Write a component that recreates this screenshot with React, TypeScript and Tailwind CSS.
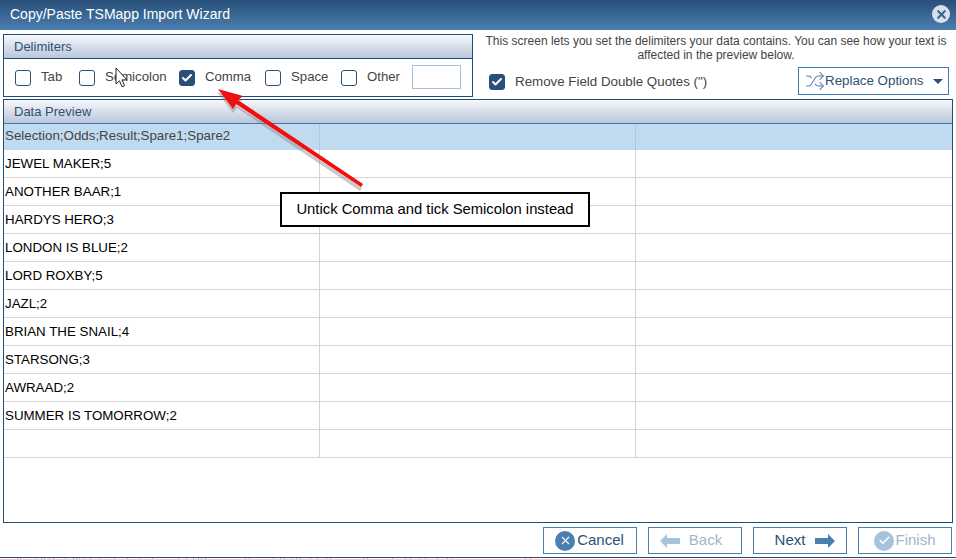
import { Check, Shuffle, X } from "lucide-react";
import React from "react";

const delimiters = [
  { label: "Tab", checked: false, box: "ml-[11px]", text: "ml-[10px] w-[23px]" },
  { label: "Semicolon", checked: false, box: "ml-[15px]", text: "ml-[10px] w-[61px]" },
  { label: "Comma", checked: true, box: "ml-[13px]", text: "ml-[10px] w-[46px]" },
  { label: "Space", checked: false, box: "ml-[14px]", text: "ml-[10px] w-[37px]" },
  { label: "Other", checked: false, box: "ml-[13px]", text: "ml-[10px] w-[33px]" },
];

const rows = [
  "JEWEL MAKER;5",
  "ANOTHER BAAR;1",
  "HARDYS HERO;3",
  "LONDON IS BLUE;2",
  "LORD ROXBY;5",
  "JAZL;2",
  "BRIAN THE SNAIL;4",
  "STARSONG;3",
  "AWRAAD;2",
  "SUMMER IS TOMORROW;2",
  "",
];

// cut-off text of the page below the dialog, only its top pixels show
const specks = [17, 20, 36, 41, 44, 49, 53, 65, 73, 76, 79, 83, 90, 99, 114, 127, 140, 152, 178, 186, 193, 198, 201, 205, 245, 249, 273, 280, 284, 292, 296, 300, 310, 317, 326, 330, 363, 367, 392, 405, 410, 420, 425, 437, 447, 452, 525, 530];

const Tick = ({ checked }: { checked: boolean }) => (
  <span
    className={`flex h-[16px] w-[16px] shrink-0 items-center justify-center rounded-[3px] border-[1.5px] border-[#2a5078] ${
      checked ? "bg-[#2a5078]" : "bg-white"
    }`}
  >
    {checked && <Check className="h-[12px] w-[12px] text-white" strokeWidth={4} />}
  </span>
);

const PanelHeader = ({ title }: { title: string }) => (
  <div className="flex h-[23px] items-center bg-gradient-to-b from-[#f7f8fb] to-[#b9c6da] pl-[10px] text-[13px] text-[#2d4f73]">
    {title}
  </div>
);

const Cell = ({ text, last }: { text?: string; last?: boolean }) => (
  <div className={`truncate pl-[1px] ${last ? "" : "border-r border-[#d4d4d4]"}`}>{text}</div>
);

export default function App() {
  return (
    <div className="relative flex h-[559px] w-[956px] flex-col overflow-hidden bg-white font-['Liberation_Sans',Arial,sans-serif] text-[13.33px] text-[#222]">
      <div className="flex h-[30px] shrink-0 items-center justify-between bg-gradient-to-b from-[#284f78] to-[#4a7fb0] pb-[2px] pl-[10px]">
        <span className="text-[14px] text-white">Copy/Paste TSMapp Import Wizard</span>
        <span className="mr-[6px] flex h-[18px] w-[18px] items-center justify-center rounded-full bg-[#d7e0ea]">
          <X className="h-[13px] w-[13px] text-[#3d6488]" strokeWidth={4} />
        </span>
      </div>

      <div className="flex h-[69px] shrink-0 pl-[3px] pr-[3px] pt-[4px]">
        <div className="h-[63px] w-[470px] shrink-0 border border-[#1f4e79]">
          <PanelHeader title="Delimiters" />
          <div className="flex h-[39px] items-center border-t border-[#1f4e79] text-[13.2px] text-[#444]">
            {delimiters.map((d) => (
              <React.Fragment key={d.label}>
                <span className={d.box}>
                  <Tick checked={d.checked} />
                </span>
                <span className={`${d.text} -mt-[2px] whitespace-nowrap`}>{d.label}</span>
              </React.Fragment>
            ))}
            <span className="-mt-[2px] ml-[12px] h-[24px] w-[49px] border border-[#a9c1dc]" />
          </div>
        </div>
        <div className="min-w-0 flex-1">
          <p className="pl-[6px] text-center text-[12px] leading-[14px] text-[#444]">
            This screen lets you set the delimiters your data contains. You can see how your text is affected in the preview below.
          </p>
          <div className="mt-[5px] flex items-center justify-between pl-[16px] pr-[4px]">
            <div className="mt-[2px] flex items-center text-[#444]">
              <Tick checked />
              <span className="ml-[10px]">Remove Field Double Quotes (")</span>
            </div>
            <button className="flex h-[28px] w-[151px] items-center border border-[#3f7ab0] pl-[6px] text-[#2d4f73]">
              <Shuffle className="h-[20px] w-[20px] text-[#4a7fb0]" strokeWidth={1.25} />
              <span>Replace Options</span>
              <span className="ml-[9px] h-0 w-0 border-x-[5px] border-t-[5px] border-x-transparent border-t-[#2a5078]" />
            </button>
          </div>
        </div>
      </div>

      <div className="mx-[3px] flex h-[424px] shrink-0 flex-col border border-[#1f4e79]">
        <PanelHeader title="Data Preview" />
        <div className="grid h-[27px] grid-cols-[316px_316px_1fr] items-stretch border-t border-[#3f7ab0] bg-[#c0dbef] text-[#444]">
          <div className="border-r border-[#b4c6d4] pl-[1px] leading-[24px]">Selection;Odds;Result;Spare1;Spare2</div>
          <div className="border-r border-[#b4c6d4]" />
          <div />
        </div>
        {rows.map((row, i) => (
          <div
            key={i}
            className="grid h-[28px] grid-cols-[316px_316px_1fr] items-stretch border-b border-[#d4d4d4] leading-[27px] text-black"
          >
            <Cell text={row} />
            <Cell />
            <Cell last />
          </div>
        ))}
      </div>

      <div className="flex h-[34px] shrink-0 items-start justify-end gap-[11px] pr-[4px] pt-[4px] text-[15px]">
        <button className="flex h-[27px] w-[94px] items-center justify-center gap-[2px] border border-[#4a7fb0] pr-[1px] text-[#2d4f73]">
          <span className="flex h-[20px] w-[20px] items-center justify-center rounded-full bg-[#4a7fb0]">
            <X className="h-[13px] w-[13px] text-white" strokeWidth={2} />
          </span>
          Cancel
        </button>
        <button className="flex h-[27px] w-[94px] items-center justify-center gap-[9px] border border-[#4a7fb0] pr-[8px] text-[#a3b5c9]">
          <svg width="20" height="14" viewBox="0 0 20 14" className="fill-[#a5c3dc]">
            <path d="M0 7 7 0v4h13v6H7v4z" />
          </svg>
          Back
        </button>
        <button className="flex h-[27px] w-[94px] items-center justify-center gap-[10px] border border-[#4a7fb0] pl-[10px] text-[#2d4f73]">
          Next
          <svg width="20" height="14" viewBox="0 0 20 14" className="fill-[#4a7fb0]">
            <path d="M20 7 13 0v4H0v6h13v4z" />
          </svg>
        </button>
        <button className="flex h-[27px] w-[94px] items-center justify-center gap-[1px] border border-[#4a7fb0] text-[#a3b5c9]">
          <span className="flex h-[20px] w-[20px] items-center justify-center rounded-full bg-[#a5c3dc]">
            <Check className="h-[13px] w-[13px] text-white" strokeWidth={3} />
          </span>
          Finish
        </button>
      </div>
      <div className="h-[1px] shrink-0 bg-[#1f4e79]" />
      <svg className="h-[1px] w-full shrink-0" width="956" height="1" viewBox="0 0 956 1">
        {specks.map((x) => (
          <rect key={x} x={x} y="0" width="1" height="1" fill="#9fb4c8" />
        ))}
      </svg>

      {/* annotation drawn on top of the screenshot */}
      <svg className="absolute left-0 top-0" width="956" height="559" viewBox="0 0 956 559">
        <path d="M363 185 237 102 243 97 218 89 234 110 238 105 361 188z" fill="#888" opacity="0.45" transform="translate(-1 3)" />
        <path d="M363 184 238 100 243 96 218 89 233 109 236 104 361 187z" fill="#f01010" />
        <path
          d="M116 68v16l3.5-3.2 2.5 6 2.6-1.1-2.6-5.8h5z"
          fill="#fff"
          stroke="#222"
          strokeWidth="1"
        />
      </svg>
      <div className="absolute left-[280px] top-[192px] flex h-[35px] w-[310px] items-center justify-center border-2 border-black bg-white text-[14.8px] text-black">
        Untick Comma and tick Semicolon instead
      </div>
    </div>
  );
}
